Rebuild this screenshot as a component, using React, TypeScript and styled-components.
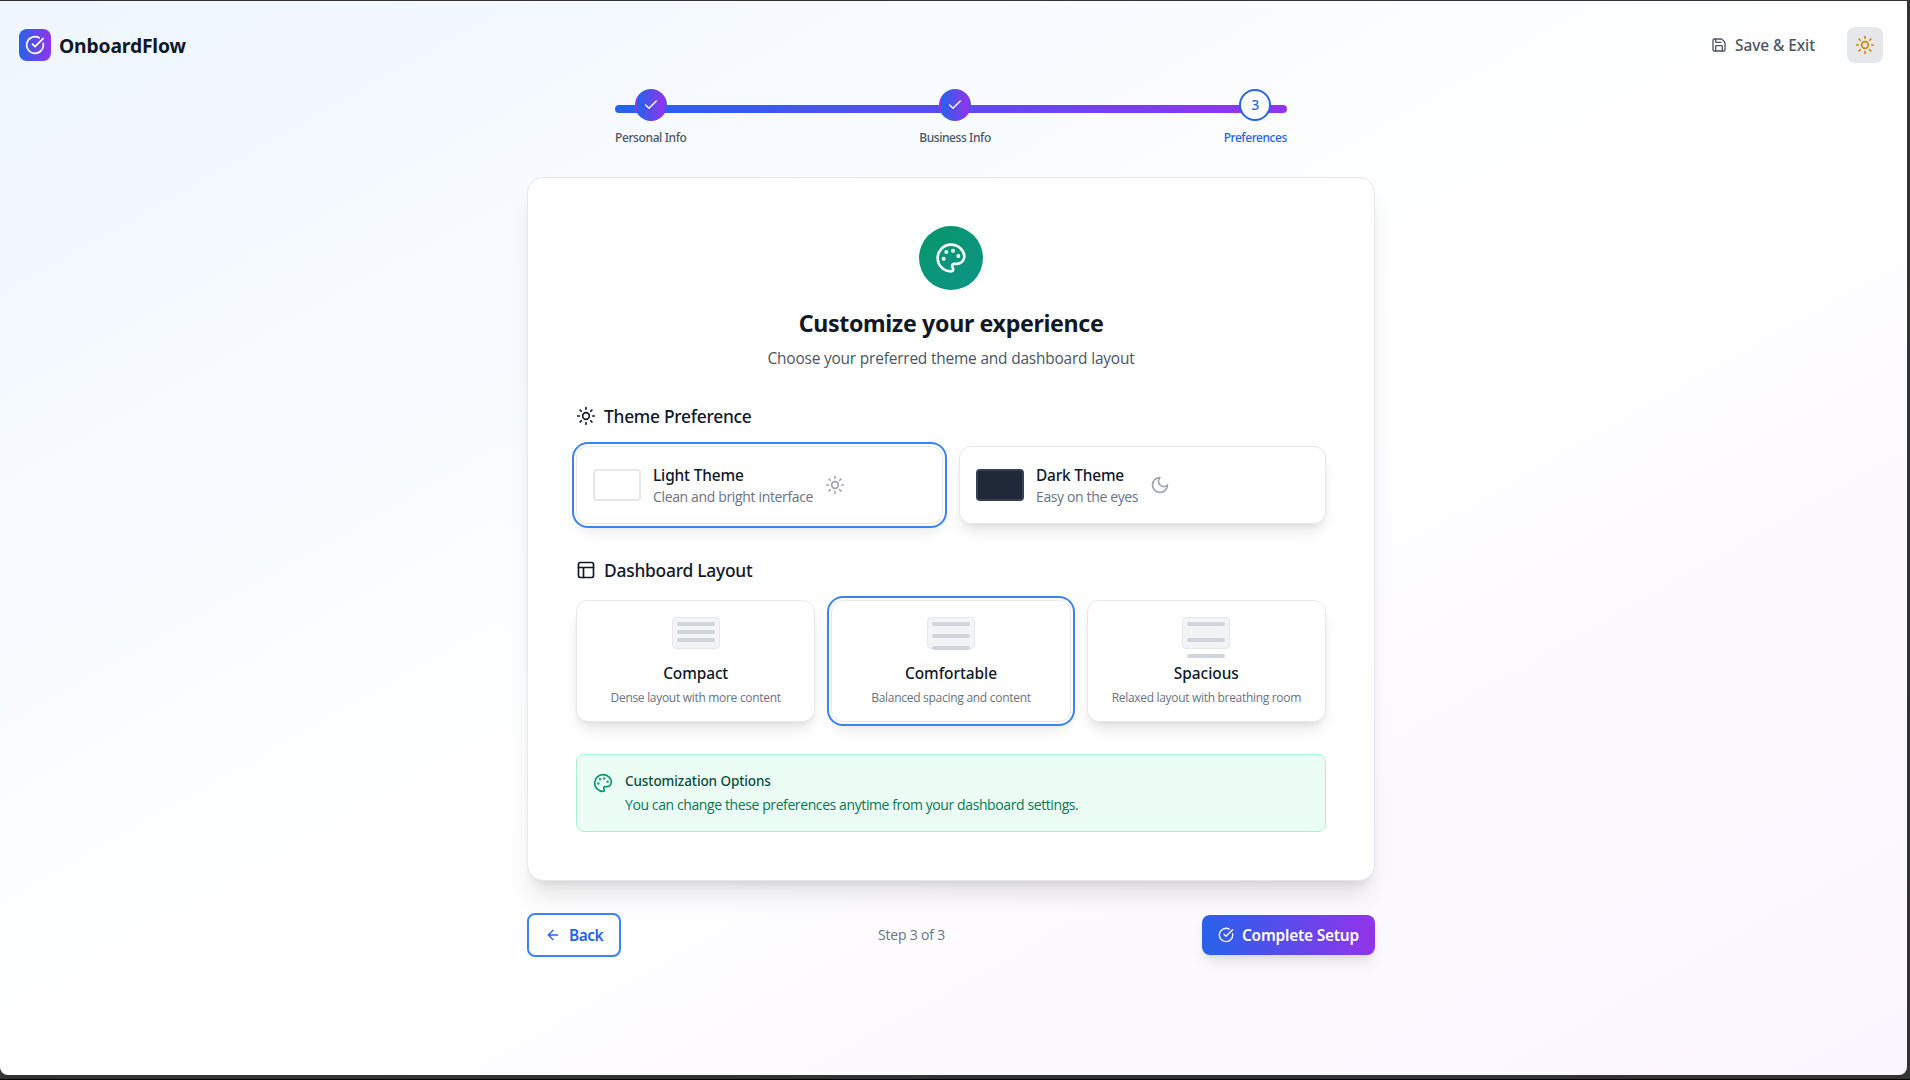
import React from 'react';
import type { ReactNode } from 'react';
import styled, { createGlobalStyle, css } from 'styled-components';

const SANS = '"Open Sans", "Noto Sans", sans-serif';
const MEDIUM = '"Noto Sans", "Open Sans", sans-serif';
const LARGE_SHADOW = '0 10px 15px -3px rgba(0, 0, 0, 0.1), 0 4px 6px -4px rgba(0, 0, 0, 0.1)';
const BRAND = 'linear-gradient(to right, #2563eb, #9333ea)';

const GlobalStyle = createGlobalStyle`
  *, *::before, *::after { box-sizing: border-box; }
  body { margin: 0; background: #333; overflow: hidden; }
  h1, h2, h3, p { margin: 0; }
  button { font: inherit; margin: 0; cursor: pointer; }
`;

/* ---------- icons ---------- */

const Svg = styled.svg<{ $size: number }>`
  display: block;
  flex: none;
  width: ${(p) => p.$size}px;
  height: ${(p) => p.$size}px;
  fill: none;
  stroke: currentColor;
  stroke-width: 2;
  stroke-linecap: round;
  stroke-linejoin: round;
`;

type IconProps = { size: number; className?: string };

const icon = (paths: ReactNode) =>
  function Icon({ size, className }: IconProps) {
    return (
      <Svg $size={size} viewBox="0 0 24 24" className={className}>
        {paths}
      </Svg>
    );
  };

const CheckCircleIcon = icon(
  <>
    <path d="M21.801 10A10 10 0 1 1 17 3.335" />
    <path d="m9 11 3 3L22 4" />
  </>
);
const CheckIcon = icon(<path d="M20 6 9 17l-5-5" />);
const SaveIcon = icon(
  <>
    <path d="M15.2 3a2 2 0 0 1 1.4.6l3.8 3.8a2 2 0 0 1 .6 1.4V19a2 2 0 0 1-2 2H5a2 2 0 0 1-2-2V5a2 2 0 0 1 2-2z" />
    <path d="M17 21v-7a1 1 0 0 0-1-1H8a1 1 0 0 0-1 1v7" />
    <path d="M7 3v4a1 1 0 0 0 1 1h7" />
  </>
);
const SunIcon = icon(
  <>
    <circle cx="12" cy="12" r="4" />
    <path d="M12 2v2M12 20v2M4.93 4.93l1.41 1.41M17.66 17.66l1.41 1.41M2 12h2M20 12h2M6.34 17.66l-1.41 1.41M19.07 4.93l-1.41 1.41" />
  </>
);
const MoonIcon = icon(<path d="M12 3a6 6 0 0 0 9 9 9 9 0 1 1-9-9Z" />);
const LayoutIcon = icon(
  <>
    <rect width="18" height="18" x="3" y="3" rx="2" />
    <path d="M3 9h18M9 21V9" />
  </>
);
const ArrowLeftIcon = icon(<path d="m12 19-7-7 7-7M19 12H5" />);
const PaletteIcon = icon(
  <>
    <circle cx="13.5" cy="6.5" r=".5" fill="currentColor" />
    <circle cx="17.5" cy="10.5" r=".5" fill="currentColor" />
    <circle cx="8.5" cy="7.5" r=".5" fill="currentColor" />
    <circle cx="6.5" cy="12.5" r=".5" fill="currentColor" />
    <path d="M12 2C6.5 2 2 6.5 2 12s4.5 10 10 10c.926 0 1.648-.746 1.648-1.688 0-.437-.18-.835-.437-1.125-.29-.289-.438-.652-.438-1.125a1.64 1.64 0 0 1 1.668-1.668h1.996c3.051 0 5.555-2.503 5.555-5.554C21.965 6.012 17.461 2 12 2z" />
  </>
);

/* ---------- typography ---------- */

const Label = styled.span<{ $track?: number; $drop?: number }>`
  display: block;
  margin: ${(p) => p.$drop ?? 0}px 0 ${(p) => -(p.$drop ?? 0)}px;
  letter-spacing: ${(p) => p.$track ?? 0}px;
  white-space: nowrap;
`;

/* ---------- frame ---------- */

const Frame = styled.div`
  height: 1080px;
  padding: 1px 3px 4px 0;
  background: #333;
  border-bottom: 1px solid #000;
`;

const Page = styled.div`
  height: 1074px;
  background: linear-gradient(to bottom right, #eff6ff, #ffffff, #faf5ff);
  border-radius: 0 0 8px 8px;
  font-family: ${SANS};
  color: #111827;
`;

const Header = styled.header`
  display: flex;
  align-items: center;
  justify-content: space-between;
  padding: 24px 24px 24px 19px;
`;

const Brand = styled.div`
  display: flex;
  align-items: center;
  gap: 8px;
  font: 700 19.3px/28px ${MEDIUM};
`;

const Logo = styled.div`
  display: grid;
  place-items: center;
  width: 32px;
  height: 32px;
  border-radius: 8px;
  background: ${BRAND};
  color: #fff;
`;

const Actions = styled.div`
  display: flex;
  align-items: center;
  gap: 16px;
`;

const buttonBase = css`
  display: flex;
  align-items: center;
  gap: 8px;
  padding: 8px 16px;
  border: 0;
  border-radius: 8px;
  font: 600 15.45px/24px ${MEDIUM};
`;

const GhostButton = styled.button`
  ${buttonBase}
  background: transparent;
  color: #4b5563;
  font-weight: 500;
`;

const ThemeToggle = styled.button`
  display: grid;
  place-items: center;
  width: 36px;
  height: 36px;
  padding: 0;
  border: 0;
  border-radius: 8px;
  background: #e5e7eb;
  color: #ca8a04;
`;

/* ---------- stepper ---------- */

const Stepper = styled.ol`
  display: grid;
  width: 672px;
  height: 56px;
  margin: 0 0 32px 615px;
  padding: 0;
  list-style: none;
`;

const Track = styled.li`
  grid-area: 1 / 1;
  height: 8px;
  margin-top: 16px;
  border-radius: 4px;
  background: ${BRAND};
`;

const Steps = styled.li`
  grid-area: 1 / 1;
  display: flex;
  justify-content: space-between;
`;

const Step = styled.div<{ $width: number; $active?: boolean }>`
  display: flex;
  flex-direction: column;
  align-items: center;
  gap: 8px;
  width: ${(p) => p.$width}px;
  color: ${(p) => (p.$active ? '#2563eb' : '#4b5563')};
  font: 500 12px/16px ${MEDIUM};
`;

const StepDot = styled.div<{ $active?: boolean }>`
  display: grid;
  place-items: center;
  width: 32px;
  height: 32px;
  border: 2px solid ${(p) => (p.$active ? '#2563eb' : 'transparent')};
  border-radius: 50%;
  background: ${(p) => (p.$active ? '#fff' : BRAND)};
  color: ${(p) => (p.$active ? '#2563eb' : '#fff')};
  font: 500 13.5px/20px ${MEDIUM};
`;

/* ---------- card ---------- */

const Main = styled.main`
  width: 848px;
  margin-left: 527px;
`;

const Card = styled.section`
  height: 704px;
  padding: 48px;
  border: 1px solid #e5e7eb;
  border-radius: 16px;
  background: #fff;
  box-shadow: 0 20px 25px -5px rgba(0, 0, 0, 0.1), 0 8px 10px -6px rgba(0, 0, 0, 0.1);
`;

const Intro = styled.div`
  display: flex;
  flex-direction: column;
  align-items: center;
  margin-bottom: 32px;
`;

const Badge = styled.div`
  display: grid;
  place-items: center;
  width: 64px;
  height: 64px;
  margin-bottom: 16px;
  border-radius: 50%;
  background: linear-gradient(to bottom right, #059669, #0d9488);
  color: #fff;
`;

const Title = styled.h1`
  height: 32px;
  margin-bottom: 8px;
  font: 700 23.2px/32px ${MEDIUM};
`;

const Subtitle = styled.p`
  color: #4b5563;
  font-size: 15.45px;
  line-height: 24px;
`;

const Group = styled.div`
  margin-bottom: 32px;
`;

const GroupTitle = styled.h2`
  display: flex;
  align-items: center;
  gap: 8px;
  margin-bottom: 16px;
  font: 500 17.4px/28px ${MEDIUM};
`;

const Options = styled.div<{ $columns: number }>`
  display: grid;
  grid-template-columns: repeat(${(p) => p.$columns}, 1fr);
  gap: 16px;
`;

const Option = styled.div<{ $selected?: boolean; $stacked?: boolean }>`
  display: flex;
  flex-direction: ${(p) => (p.$stacked ? 'column' : 'row')};
  align-items: center;
  gap: ${(p) => (p.$stacked ? 0 : 12)}px;
  padding: 16px;
  border: 1px solid #e5e7eb;
  border-radius: 12px;
  background: #fff;
  box-shadow: ${(p) => (p.$selected ? '0 0 0 2px #fff, 0 0 0 4px #3b82f6, ' : '')}${LARGE_SHADOW};
`;

const Swatch = styled.div<{ $dark?: boolean }>`
  width: 48px;
  height: 32px;
  margin: 6px 0;
  border: 2px solid ${(p) => (p.$dark ? '#374151' : '#e5e7eb')};
  border-radius: 4px;
  background: ${(p) => (p.$dark ? '#1f2937' : '#fff')};
`;

const OptionIcon = styled.div`
  color: #9ca3af;
`;

const OptionText = styled.div<{ $width: number }>`
  width: ${(p) => p.$width}px;
`;

const OptionName = styled.h3`
  font: 500 15.45px/24px ${MEDIUM};
`;

const OptionNote = styled.p`
  color: #6b7280;
  font-size: 14px;
  line-height: 20px;
`;

const Caption = styled.p`
  height: 16px;
  margin-top: 4px;
  color: #6b7280;
  font-size: 12px;
  line-height: 16px;
`;

const Preview = styled.div<{ $gap: number }>`
  display: flex;
  flex-direction: column;
  gap: ${(p) => p.$gap}px;
  width: 48px;
  height: 32px;
  margin-bottom: 12px;
  padding: 4px;
  border: 1px solid #e5e7eb;
  border-radius: 4px;
  background: #f3f4f6;
`;

const Line = styled.div`
  flex: none;
  height: 4px;
  border-radius: 2px;
  background: #d1d5db;
`;

const Notice = styled.aside`
  display: flex;
  gap: 12px;
  padding: 16px;
  border: 1px solid #a7f3d0;
  border-radius: 8px;
  background: #ecfdf5;
`;

const NoticeIcon = styled.div`
  margin-top: 2px;
  color: #059669;
`;

const NoticeTitle = styled.h3`
  margin-bottom: 4px;
  color: #064e3b;
  font: 500 13.5px/20px ${MEDIUM};
`;

const NoticeText = styled.p`
  color: #047857;
  font-size: 14px;
  line-height: 20px;
`;

/* ---------- footer navigation ---------- */

const Footer = styled.nav`
  display: flex;
  align-items: center;
  justify-content: space-between;
  margin-top: 32px;
`;

const BackButton = styled.button`
  ${buttonBase}
  width: 94px;
  border: 2px solid #3b82f6;
  background: #fff;
  color: #2563eb;
`;

const NextButton = styled.button`
  ${buttonBase}
  width: 173px;
  background: ${BRAND};
  color: #fff;
  box-shadow: ${LARGE_SHADOW};
`;

const Progress = styled.span`
  color: #6b7280;
  font-size: 14px;
  line-height: 20px;
`;

const layouts = [
  { name: 'Compact', nameTrack: -0.11, note: 'Dense layout with more content', noteTrack: -0.3, gap: 4 },
  { name: 'Comfortable', nameTrack: -0.06, note: 'Balanced spacing and content', noteTrack: -0.28, gap: 8, selected: true },
  { name: 'Spacious', nameTrack: -0.03, note: 'Relaxed layout with breathing room', noteTrack: -0.31, gap: 12 },
];

export default function App() {
  return (
    <Frame>
      <GlobalStyle />
      <Page>
        <Header>
          <Brand>
            <Logo>
              <CheckCircleIcon size={20} />
            </Logo>
            <Label $track={-0.15} $drop={1}>OnboardFlow</Label>
          </Brand>
          <Actions>
            <GhostButton>
              <SaveIcon size={16} />
              <Label $track={-0.07}>Save &amp; Exit</Label>
            </GhostButton>
            <ThemeToggle aria-label="Toggle theme">
              <SunIcon size={20} />
            </ThemeToggle>
          </Actions>
        </Header>

        <Stepper>
          <Track />
          <Steps>
            <Step $width={71.5}>
              <StepDot>
                <CheckIcon size={16} />
              </StepDot>
              <Label $track={-0.39} $drop={1}>Personal Info</Label>
            </Step>
            <Step $width={71.5}>
              <StepDot>
                <CheckIcon size={16} />
              </StepDot>
              <Label $track={-0.42} $drop={1}>Business Info</Label>
            </Step>
            <Step $width={63.5} $active>
              <StepDot $active>3</StepDot>
              <Label $track={-0.44} $drop={1}>Preferences</Label>
            </Step>
          </Steps>
        </Stepper>

        <Main>
          <Card>
            <Intro>
              <Badge>
                <PaletteIcon size={32} />
              </Badge>
              <Title>
                <Label $track={-0.35} $drop={1}>Customize your experience</Label>
              </Title>
              <Subtitle>
                <Label $track={-0.19}>Choose your preferred theme and dashboard layout</Label>
              </Subtitle>
            </Intro>

            <Group>
              <GroupTitle>
                <SunIcon size={20} />
                <Label $track={-0.27}>Theme Preference</Label>
              </GroupTitle>
              <Options $columns={2}>
                <Option $selected>
                  <Swatch />
                  <OptionText $width={160}>
                    <OptionName>
                      <Label $track={-0.14}>Light Theme</Label>
                    </OptionName>
                    <OptionNote>
                      <Label $track={-0.35}>Clean and bright interface</Label>
                    </OptionNote>
                  </OptionText>
                  <OptionIcon>
                    <SunIcon size={20} />
                  </OptionIcon>
                </Option>
                <Option>
                  <Swatch $dark />
                  <OptionText $width={102}>
                    <OptionName>
                      <Label $track={-0.2}>Dark Theme</Label>
                    </OptionName>
                    <OptionNote>
                      <Label $track={-0.37}>Easy on the eyes</Label>
                    </OptionNote>
                  </OptionText>
                  <OptionIcon>
                    <MoonIcon size={20} />
                  </OptionIcon>
                </Option>
              </Options>
            </Group>

            <Group>
              <GroupTitle>
                <LayoutIcon size={20} />
                <Label $track={-0.24}>Dashboard Layout</Label>
              </GroupTitle>
              <Options $columns={3}>
                {layouts.map((l) => (
                  <Option key={l.name} $stacked $selected={l.selected}>
                    <Preview $gap={l.gap}>
                      <Line />
                      <Line />
                      <Line />
                    </Preview>
                    <OptionName>
                      <Label $track={l.nameTrack}>{l.name}</Label>
                    </OptionName>
                    <Caption>
                      <Label $track={l.noteTrack} $drop={1}>{l.note}</Label>
                    </Caption>
                  </Option>
                ))}
              </Options>
            </Group>

            <Notice>
              <NoticeIcon>
                <PaletteIcon size={20} />
              </NoticeIcon>
              <div>
                <NoticeTitle>
                  <Label $track={-0.09}>Customization Options</Label>
                </NoticeTitle>
                <NoticeText>
                  <Label $track={-0.4}>
                    You can change these preferences anytime from your dashboard settings.
                  </Label>
                </NoticeText>
              </div>
            </Notice>
          </Card>

          <Footer>
            <BackButton>
              <ArrowLeftIcon size={16} />
              <Label $track={-0.5}>Back</Label>
            </BackButton>
            <Progress>
              <Label $track={-0.2}>Step 3 of 3</Label>
            </Progress>
            <NextButton>
              <CheckCircleIcon size={16} />
              <Label $track={-0.21}>Complete Setup</Label>
            </NextButton>
          </Footer>
        </Main>
      </Page>
    </Frame>
  );
}
